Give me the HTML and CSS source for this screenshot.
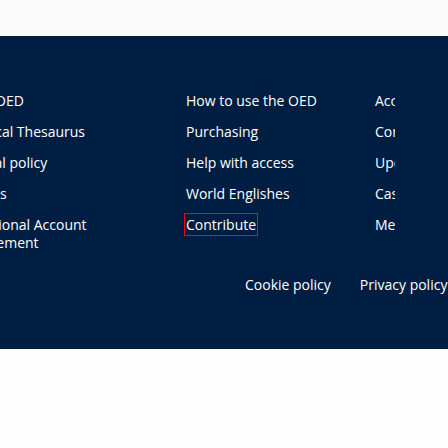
FILE: index.html
```html
<!DOCTYPE html>
<html lang="en">
<head>
<meta charset="utf-8">
<title>OED footer</title>
<link rel="stylesheet" href="styles.css">
</head>
<body>
<div class="topbar"></div>
<footer class="footer">
  <div class="cols">
    <ul class="col col-1">
      <li><a href="#">About OED</a></li>
      <li><a href="#">Historical Thesaurus</a></li>
      <li><a href="#">Editorial policy</a></li>
      <li><a href="#">Updates</a></li>
      <li><a href="#">Institutional Account Management</a></li>
    </ul>
    <ul class="col col-2">
      <li><a href="#">How to use the OED</a></li>
      <li><a href="#">Purchasing</a></li>
      <li><a href="#">Help with access</a></li>
      <li><a href="#">World Englishes</a></li>
      <li><a href="#" class="focused">Contribute</a></li>
    </ul>
    <ul class="col col-3">
      <li><a href="#">Accessibility</a></li>
      <li><a href="#">Contact us</a></li>
      <li><a href="#">Upcoming events</a></li>
      <li><a href="#">Case studies</a></li>
      <li><a href="#">Media enquiries</a></li>
    </ul>
  </div>
  <div class="legal">
    <a href="#">Cookie policy</a>
    <a href="#">Privacy policy</a>
  </div>
</footer>
<div class="after"></div>
</body>
</html>
```
FILE: styles.css
```css
html, body {
  margin: 0;
  padding: 0;
  background: #fefefe;
  overflow: hidden;
}
body {
  font-family: "Open Sans", "Noto Sans", sans-serif;
  font-size: 14px;
  line-height: 18px;
  width: 448px;
}
.topbar {
  height: 36px;
  background: #fafafa;
}
.footer {
  background: #001e42;
  color: #ffffff;
  height: 313px;
  box-sizing: border-box;
  padding-top: 56px;
}
.footer a {
  color: #ffffff;
  text-decoration: none;
}
.cols {
  display: grid;
  grid-template-columns: 234px 189px 20px;
  margin-left: -48px;
  width: 443px;
  overflow: hidden;
  padding-top: 2px;
  margin-top: -2px;
  padding-bottom: 2px;
  margin-bottom: -2px;
}
.col {
  list-style: none;
  margin: 0;
  padding: 0;
  display: flex;
  flex-direction: column;
  gap: 13px;
}
.col-1 {
  width: 143px;
}
.col-3 {
  white-space: nowrap;
}
.focused {
  outline: 1px solid #ff0000;
  outline-offset: 1px;
}
.legal {
  display: flex;
  gap: 29px;
  margin-left: 245px;
  margin-top: 24px;
  white-space: nowrap;
}
.after {
  height: 99px;
  background: #fefefe;
}
```
